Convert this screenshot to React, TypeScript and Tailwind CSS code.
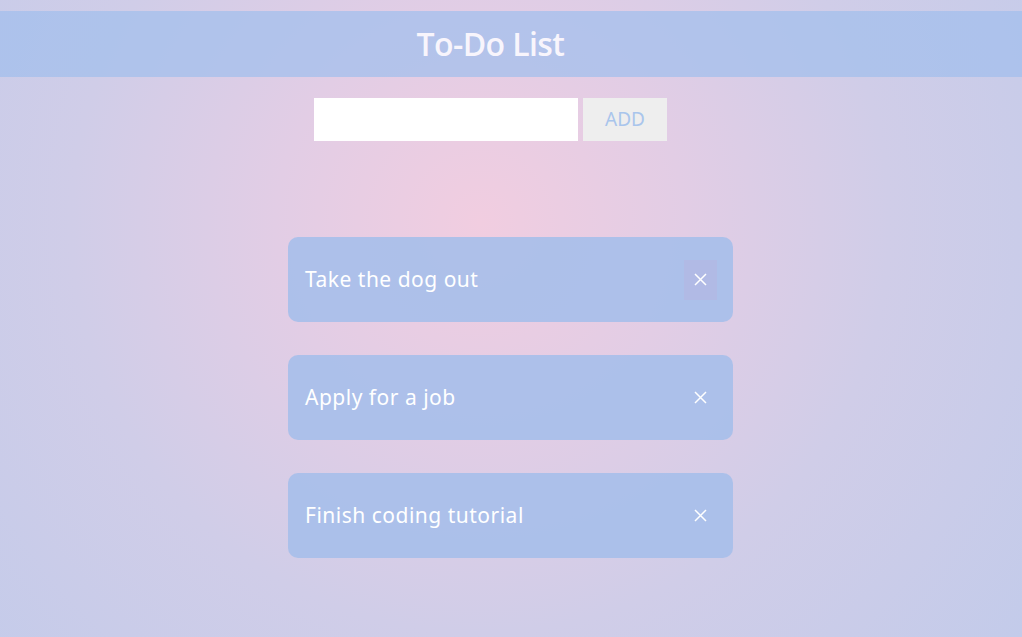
import { useState } from "react"

const initial = ["Take the dog out", "Apply for a job", "Finish coding tutorial"]

export default function App() {
  const [items, setItems] = useState(initial)
  const [text, setText] = useState("")

  const add = () => {
    if (!text.trim()) return
    setItems([...items, text.trim()])
    setText("")
  }

  return (
    <main className="min-h-screen h-[637px] overflow-hidden bg-[radial-gradient(circle_at_47%_35%,#f1cde0_0%,#e2cde5_30%,#d0cde8_60%,#c3cbea_100%)] pt-[11px] font-['Noto_Sans',sans-serif]">
      {/* Header */}
      <header className="h-[66px] bg-[#a3bfec]/75 flex items-center justify-center pr-[41px]">
        <h1 className="text-[32px] font-semibold text-[#f8f5fc] tracking-[-0.6px] font-['Open_Sans',sans-serif]">To-Do List</h1>
      </header>

      {/* Input row */}
      <div className="mt-[21px] flex justify-center gap-[5px] pr-[41px]">
        <input
          value={text}
          onChange={(e) => setText(e.target.value)}
          className="w-[264px] h-[43px] bg-white px-3 outline-none text-lg"
        />
        <button
          onClick={add}
          className="w-[84px] h-[43px] bg-[#eeeeee] text-[#a9c5ec] text-[19px]"
        >
          ADD
        </button>
      </div>

      {/* List */}
      <ul className="mt-[96px] flex flex-col items-center gap-[33px] pr-[1px]">
        {items.map((item, i) => (
          <li
            key={item}
            className="w-[445px] h-[85px] rounded-[10px] bg-[#a6bfea]/90 flex items-center justify-between pl-[17px] pr-[16px]"
          >
            <span className="text-white text-[21px] tracking-[0.5px]">{item}</span>
            <button
              onClick={() => setItems(items.filter((_, j) => j !== i))}
              className={`w-[33px] h-[40px] flex items-center justify-center text-white ${
                i === 0 ? "bg-[#b4b8e2]/70" : ""
              }`}
            >
              <svg width="13" height="13" viewBox="0 0 13 13" stroke="currentColor" strokeWidth="1.5">
                <path d="M1 1L12 12M12 1L1 12" />
              </svg>
            </button>
          </li>
        ))}
      </ul>
    </main>
  )
}
